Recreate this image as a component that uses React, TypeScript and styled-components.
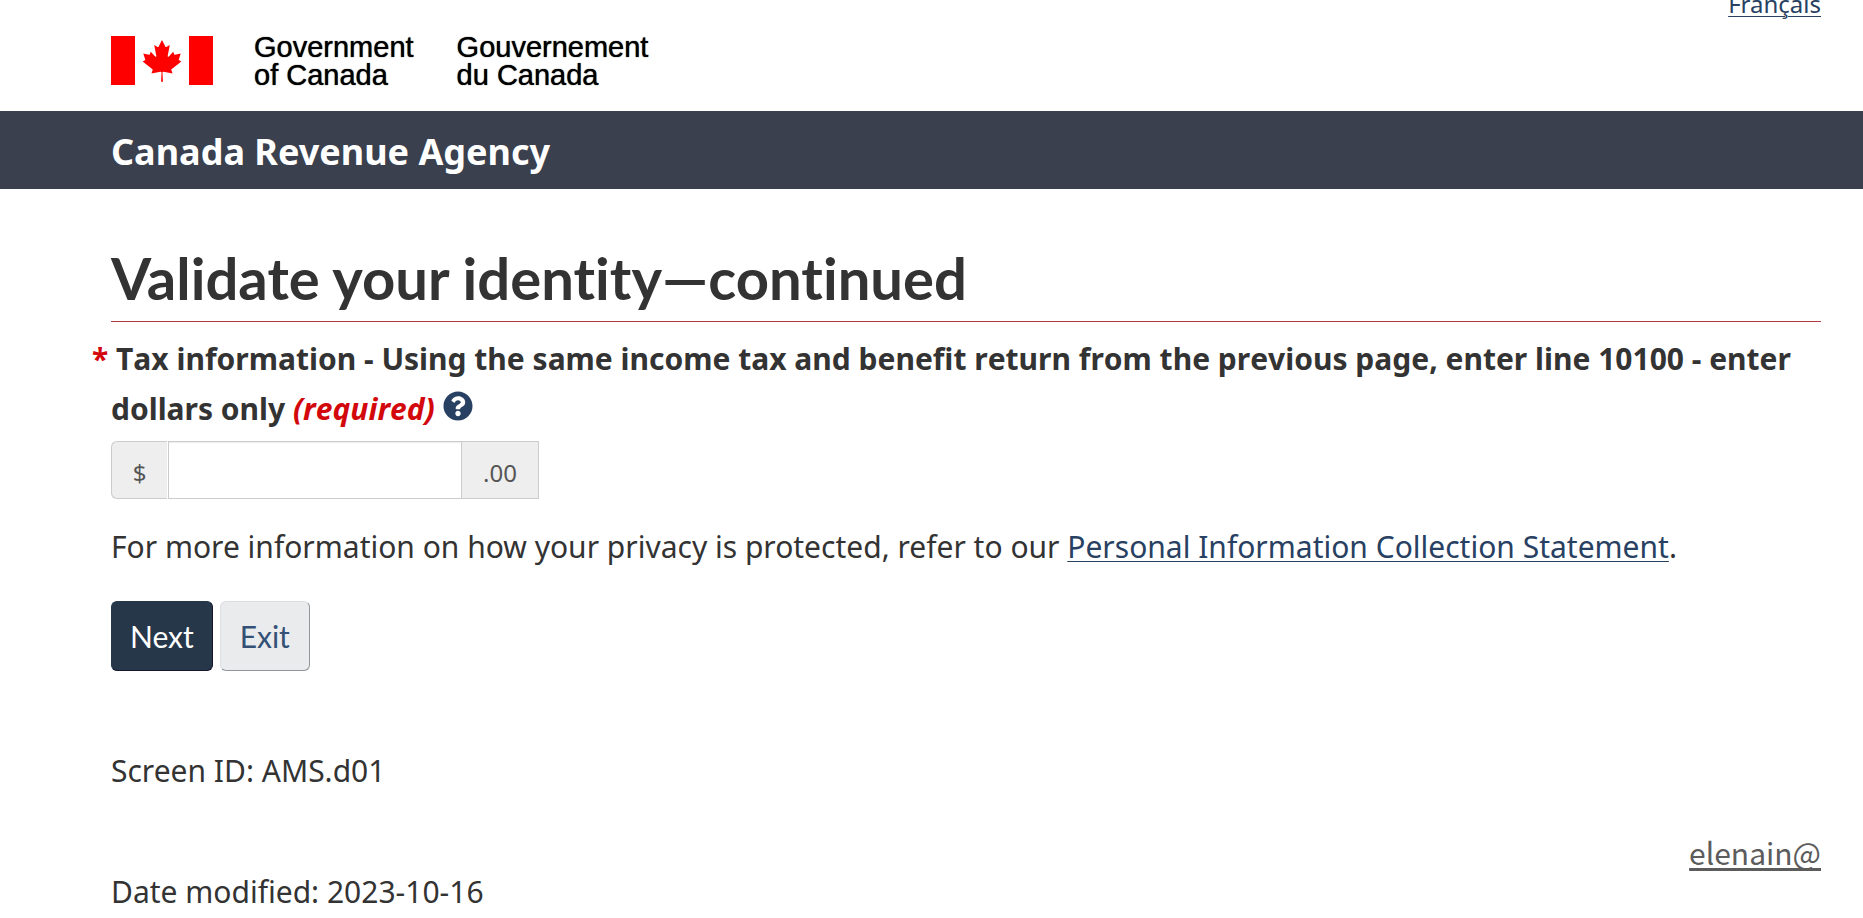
import React from "react";
import styled, { createGlobalStyle } from "styled-components";
import { FaQuestionCircle } from "react-icons/fa";

const GlobalStyle = createGlobalStyle`
  *, *::before, *::after { box-sizing: border-box; }
  body {
    margin: 0;
    background: #fff;
    color: #333;
    font-family: "Noto Sans", sans-serif;
    font-size: 30px;
    line-height: 50px;
    overflow: hidden;
  }
`;

const gutters = "padding-left: 111px; padding-right: 42px;";

const Header = styled.header`
  ${gutters}
  display: flex;
  justify-content: space-between;
  align-items: flex-start;
  overflow: hidden;
`;

const Brand = styled.a`
  display: flex;
  align-items: center;
  padding: 33px 0 22px;
  color: #000;
  text-decoration: none;
`;

const Flag = styled.svg`
  display: block;
  width: 102px;
  height: 50px;
  margin-right: 41px;
`;

const BrandName = styled.span`
  margin-right: 43px;
  font-family: "Liberation Sans", Arial, sans-serif;
  font-size: 29px;
  line-height: 28px;
  text-shadow: 0 0 1px #000;
`;

const LanguageNav = styled.nav`
  margin-top: -16px;
  font-size: 24px;
  line-height: 40px;
`;

const TextLink = styled.a`
  color: #284162;
  text-decoration: underline;
  text-decoration-thickness: 1px;
  text-underline-offset: 3px;
`;

const AgencyBar = styled.div`
  ${gutters}
  padding-top: 16px;
  padding-bottom: 12px;
  background: #3a404d;
  color: #fff;
  font-size: 36px;
  font-weight: 700;
`;

const Main = styled.main`
  ${gutters}
`;

const Title = styled.h1`
  margin: 57px 0 12px;
  padding-bottom: 11px;
  border-bottom: 1px solid #af3c43;
  font-family: Lato, sans-serif;
  font-size: 58px;
  font-weight: 700;
  font-variant-ligatures: none;
  line-height: 64px;
`;

const FieldLabel = styled.label`
  font-weight: 700;
  font-kerning: none;
  &::before {
    content: "* ";
    margin-left: -19px;
    color: #d3080c;
  }
`;

const Required = styled.em`
  color: #d3080c;
`;

const HelpButton = styled.button`
  padding: 0;
  margin-left: 8px;
  border: 0;
  background: none;
  color: #284162;
  font-size: 30px;
  line-height: 30px;
  svg { display: block; }
`;

const HelpSlot = styled.span`
  display: inline-flex;
  align-items: flex-start;
  vertical-align: text-bottom;
  height: 38px;
`;

const InputGroup = styled.div`
  display: flex;
  height: 58px;
  margin-top: 7px;
`;

const Addon = styled.span<{ $side: "left" | "right" }>`
  width: ${(p) => (p.$side === "left" ? 56 : 77)}px;
  padding-top: 6px;
  border: 1px solid #ccc;
  ${(p) =>
    p.$side === "left"
      ? "border-right: 0; border-radius: 6px 0 0 6px; margin-right: 1px;"
      : "border-left: 0;"}
  background: #eee;
  color: #555;
  font-size: 24px;
  text-align: center;
`;

const AmountInput = styled.input`
  width: 294px;
  padding: 9px 18px;
  border: 1px solid #ccc;
  border-radius: 0;
  box-shadow: inset 0 1px 1px rgba(0, 0, 0, 0.075);
  background: #fff;
  color: #555;
  font: inherit;
  font-size: 24px;
  outline: none;
`;

const Privacy = styled.p`
  margin: 23px 0 29px;
`;

const Actions = styled.div`
  display: flex;
  gap: 7px;
`;

const ActionButton = styled.button<{ $primary?: boolean }>`
  height: 70px;
  min-width: 90px;
  padding: 0 18px;
  border: 1px solid;
  border-color: ${(p) =>
    p.$primary ? "#26374a #16162e #16162e #26374a" : "#dcdee1 #91959b #91959b #dcdee1"};
  border-radius: 6px;
  background: ${(p) => (p.$primary ? "#26374a" : "#eaebed")};
  color: ${(p) => (p.$primary ? "#fff" : "#335075")};
  font-family: Lato, sans-serif;
  font-size: 30px;
  line-height: 42px;
`;

const ScreenId = styled.p`
  margin: 75px 0 36px;
`;

const Footer = styled.footer`
  ${gutters}
  display: flex;
  justify-content: space-between;
  align-items: flex-start;
`;

const Modified = styled.p`
  margin: 35px 0 0;
`;

const UserLink = styled.a`
  color: #5c5c5c;
  font-family: "Noto Sans CJK SC", sans-serif;
  font-size: 30px;
  line-height: 40px;
  text-decoration: underline;
  text-decoration-thickness: 3px;
  text-decoration-skip-ink: none;
  text-underline-offset: 3px;
`;

const leaf =
  "m-90 2030 45-863a95 95 0 0 0-111-98l-859 151 116-320a65 65 0 0 0-20-73l-941-762 212-99a65 65 0 0 0 34-79l-186-572 542 115a65 65 0 0 0 73-38l105-247 423 454a65 65 0 0 0 111-57l-204-1052 327 189a65 65 0 0 0 91-27l332-652 332 652a65 65 0 0 0 91 27l327-189-204 1052a65 65 0 0 0 111 57l423-454 105 247a65 65 0 0 0 73 38l542-115-186 572a65 65 0 0 0 34 79l212 99-941 762a65 65 0 0 0-20 73l116 320-859-151a95 95 0 0 0-111 98l45 863z";

export default function App() {
  return (
    <>
      <GlobalStyle />
      <Header>
        <Brand href="#home">
          <Flag viewBox="0 0 102 50" aria-hidden="true">
            <path fill="#f00" d="M0 0h24v49H0zM78 0h24v49H78z" />
            <path fill="#f00" transform="translate(51 24.7) scale(.0104)" d={leaf} />
          </Flag>
          <BrandName>
            Government
            <br />
            of Canada
          </BrandName>
          <BrandName lang="fr">
            Gouvernement
            <br />
            du Canada
          </BrandName>
        </Brand>
        <LanguageNav>
          <TextLink href="#fr" lang="fr">Français</TextLink>
        </LanguageNav>
      </Header>
      <AgencyBar>Canada Revenue Agency</AgencyBar>
      <Main>
        <Title>Validate your identity—continued</Title>
        <div>
          <FieldLabel htmlFor="amount">
            Tax information - Using the same income tax and benefit return from the previous page,
            enter line 10100 - enter dollars only <Required>(required)</Required>
          </FieldLabel>
          <HelpSlot>
            <HelpButton type="button" aria-label="Help">
              <FaQuestionCircle />
            </HelpButton>
          </HelpSlot>
        </div>
        <InputGroup>
          <Addon $side="left">$</Addon>
          <AmountInput id="amount" type="text" inputMode="numeric" />
          <Addon $side="right">.00</Addon>
        </InputGroup>
        <Privacy>
          For more information on how your privacy is protected, refer to our{" "}
          <TextLink href="#privacy">Personal Information Collection Statement</TextLink>.
        </Privacy>
        <Actions>
          <ActionButton type="submit" $primary>Next</ActionButton>
          <ActionButton type="button">Exit</ActionButton>
        </Actions>
        <ScreenId>Screen ID: AMS.d01</ScreenId>
      </Main>
      <Footer>
        <Modified>
          Date modified: <time dateTime="2023-10-16">2023-10-16</time>
        </Modified>
        <UserLink href="#user">elenain@</UserLink>
      </Footer>
    </>
  );
}
